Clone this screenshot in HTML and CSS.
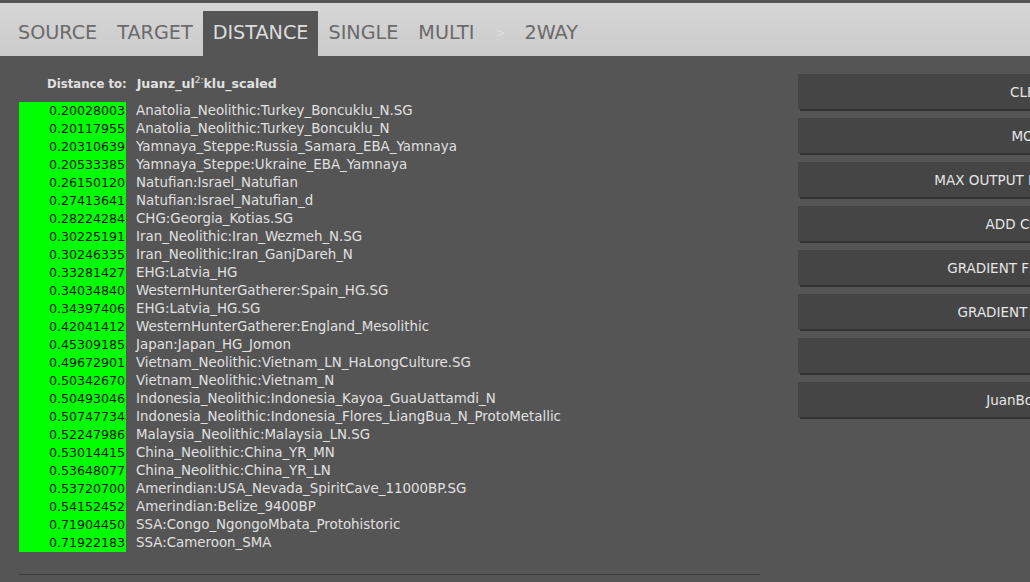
FILE: index.html
```html
<!DOCTYPE html>
<html lang="en">
<head>
    <meta charset="UTF-8">
    <title>Distance</title>
    <link rel="stylesheet" href="styles.css">
</head>
<body>
    <div class="topline"></div>
    <nav class="tabs">
        <span class="tab">SOURCE</span>
        <span class="tab">TARGET</span>
        <span class="tab active">DISTANCE</span>
        <span class="tab">SINGLE</span>
        <span class="tab">MULTI</span>
        <span class="tab faint">&gt;</span>
        <span class="tab">2WAY</span>
    </nav>

    <div class="main">
        <div class="results">
            <div class="dist-title">
                <span class="dist-label">Distance to:</span>
                <span class="dist-target">Juanz_ul<sup>2:</sup>klu_scaled</span>
            </div>
            <table class="dist-table">
                <tr><td class="val">0.20028003</td><td class="pop">Anatolia_Neolithic:Turkey_Boncuklu_N.SG</td></tr>
                <tr><td class="val">0.20117955</td><td class="pop">Anatolia_Neolithic:Turkey_Boncuklu_N</td></tr>
                <tr><td class="val">0.20310639</td><td class="pop">Yamnaya_Steppe:Russia_Samara_EBA_Yamnaya</td></tr>
                <tr><td class="val">0.20533385</td><td class="pop">Yamnaya_Steppe:Ukraine_EBA_Yamnaya</td></tr>
                <tr><td class="val">0.26150120</td><td class="pop">Natufian:Israel_Natufian</td></tr>
                <tr><td class="val">0.27413641</td><td class="pop">Natufian:Israel_Natufian_d</td></tr>
                <tr><td class="val">0.28224284</td><td class="pop">CHG:Georgia_Kotias.SG</td></tr>
                <tr><td class="val">0.30225191</td><td class="pop">Iran_Neolithic:Iran_Wezmeh_N.SG</td></tr>
                <tr><td class="val">0.30246335</td><td class="pop">Iran_Neolithic:Iran_GanjDareh_N</td></tr>
                <tr><td class="val">0.33281427</td><td class="pop">EHG:Latvia_HG</td></tr>
                <tr><td class="val">0.34034840</td><td class="pop">WesternHunterGatherer:Spain_HG.SG</td></tr>
                <tr><td class="val">0.34397406</td><td class="pop">EHG:Latvia_HG.SG</td></tr>
                <tr><td class="val">0.42041412</td><td class="pop">WesternHunterGatherer:England_Mesolithic</td></tr>
                <tr><td class="val">0.45309185</td><td class="pop">Japan:Japan_HG_Jomon</td></tr>
                <tr><td class="val">0.49672901</td><td class="pop">Vietnam_Neolithic:Vietnam_LN_HaLongCulture.SG</td></tr>
                <tr><td class="val">0.50342670</td><td class="pop">Vietnam_Neolithic:Vietnam_N</td></tr>
                <tr><td class="val">0.50493046</td><td class="pop">Indonesia_Neolithic:Indonesia_Kayoa_GuaUattamdi_N</td></tr>
                <tr><td class="val">0.50747734</td><td class="pop">Indonesia_Neolithic:Indonesia_Flores_LiangBua_N_ProtoMetallic</td></tr>
                <tr><td class="val">0.52247986</td><td class="pop">Malaysia_Neolithic:Malaysia_LN.SG</td></tr>
                <tr><td class="val">0.53014415</td><td class="pop">China_Neolithic:China_YR_MN</td></tr>
                <tr><td class="val">0.53648077</td><td class="pop">China_Neolithic:China_YR_LN</td></tr>
                <tr><td class="val">0.53720700</td><td class="pop">Amerindian:USA_Nevada_SpiritCave_11000BP.SG</td></tr>
                <tr><td class="val">0.54152452</td><td class="pop">Amerindian:Belize_9400BP</td></tr>
                <tr><td class="val">0.71904450</td><td class="pop">SSA:Congo_NgongoMbata_Protohistoric</td></tr>
                <tr><td class="val">0.71922183</td><td class="pop">SSA:Cameroon_SMA</td></tr>
            </table>
            <hr class="divider">
        </div>

        <div class="side">
            <button class="btn">CLEAR</button>
            <button class="btn">MODE</button>
            <button class="btn">MAX OUTPUT NUMBER: 1000</button>
            <button class="btn">ADD COLUMN</button>
            <button class="btn">GRADIENT FROM: 0.2000</button>
            <button class="btn">GRADIENT TO: 0.7200</button>
            <button class="btn"></button>
            <button class="btn">JuanBoncuklu</button>
        </div>
    </div>
</body>
</html>
```

FILE: styles.css
```css
* {
    box-sizing: border-box;
}

html, body {
    height: 100%;
}

body {
    margin: 0;
    font-family: "DejaVu Sans", sans-serif;
    background: #555555;
    color: #dddddd;
    overflow: hidden;
}

.topline {
    height: 3px;
    background: #555555;
}

.tabs {
    display: flex;
    align-items: flex-end;
    height: 53px;
    padding-left: 8px;
    background: linear-gradient(#d6d6d6, #cbcbcb);
}

.tab {
    height: 45px;
    line-height: 44px;
    padding: 0 10px;
    font-size: 19.2px;
    color: #6a6a6a;
}

.tab.active {
    background: #555555;
    color: #dddddd;
}

.tab.faint {
    color: #dedede;
    font-size: 12px;
    padding: 0 9px 0 11px;
}

.main {
    display: flex;
    gap: 38px;
    padding: 18px 0 0 19px;
    width: 1400px;
}

.results {
    width: 741px;
    flex-shrink: 0;
}

.dist-title {
    display: flex;
    gap: 10px;
    height: 20px;
    padding-left: 28px;
    font-weight: bold;
    line-height: 20px;
    color: #e0e0e0;
}

.dist-label {
    font-size: 11.7px;
}

.dist-target {
    font-size: 12.6px;
}

.dist-target sup {
    font-size: 9px;
    font-weight: normal;
    line-height: 0;
}

.dist-table {
    border-collapse: collapse;
    margin-top: 8px;
}

.dist-table td {
    height: 18px;
    padding: 0;
    line-height: 18px;
    white-space: nowrap;
}

.val {
    width: 107px;
    padding-right: 1px !important;
    text-align: right;
    background: #00ff00;
    color: #111111;
    font-size: 12.6px;
}

.pop {
    padding-left: 10px !important;
    color: #e0e0e0;
    font-size: 13.4px;
}

.divider {
    margin: 22px 0 0 0;
    border: none;
    border-top: 1px solid #3a3a3a;
}

.side {
    display: flex;
    flex-direction: column;
    gap: 9px;
    width: 468px;
}

.btn {
    height: 35px;
    border: none;
    background: #454545;
    box-shadow: 2px 2px 0 #333333;
    color: #e6e6e6;
    font-family: inherit;
    font-size: 13.5px;
    text-align: center;
}
```
